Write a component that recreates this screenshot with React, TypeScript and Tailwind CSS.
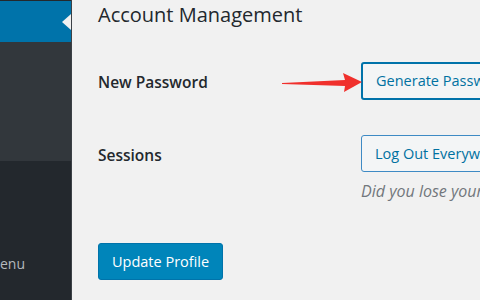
import React from 'react';

const font = { fontFamily: '"Open Sans", "Noto Sans", sans-serif' };

const Sidebar = () => (
    <div className="w-[72px] shrink-0 flex flex-col bg-[#23282d] border-r border-[#3c4146]">
        <div className="h-px bg-[#23282d]" />
        {/* current menu item */}
        <div className="relative h-[41px] bg-[#0073aa]">
            <div className="absolute right-0 top-[13px] w-0 h-0 border-y-[8px] border-y-transparent border-r-[9px] border-r-[#f1f1f1]" />
        </div>
        {/* submenu */}
        <div className="h-[119px] bg-[#32373c]" />
        <div className="flex-1 flex flex-col">
            <div className="mt-[92px] h-[20px] w-[25px] overflow-hidden flex justify-end items-center">
                <span className="whitespace-nowrap text-[14px] text-[#b4b9be]">Collapse menu</span>
            </div>
        </div>
    </div>
);

const Row = ({ label, children, height }: { label: string; children: React.ReactNode; height: string }) => (
    <div className={`flex ${height}`}>
        <div className="w-[263px] shrink-0 text-[15.5px] font-semibold text-[#23282d] pt-[9px]">{label}</div>
        <div className="flex-1">{children}</div>
    </div>
);

export default function App() {
    return (
        <div className="w-[480px] h-[300px] overflow-hidden flex bg-[#f1f1f1]" style={font}>
            <Sidebar />
            <div className="relative flex-1 pl-[26px] pt-px overflow-hidden">
                <h2 className="text-[20px] leading-[28px] font-medium text-[#23282d] whitespace-nowrap">Account Management</h2>

                <div className="mt-[33px] flex flex-col">
                    <Row label="New Password" height="h-[73px]">
                        <button className="h-[38px] px-[13px] whitespace-nowrap rounded-[3px] border-2 border-[#0073aa] bg-[#f3f5f6] text-[14.5px] text-[#0071a1]">
                            Generate Password
                        </button>
                    </Row>
                    <Row label="Sessions" height="h-[108px]">
                        <div className="flex flex-col">
                            <button className="self-start h-[37px] px-[13px] whitespace-nowrap rounded-[3px] border border-[#3e8ac4] bg-[#f3f5f6] text-[14.5px] text-[#0071a1]">
                                Log Out Everywhere Else
                            </button>
                            <p className="mt-[7px] text-[16px] italic text-[#72777c] whitespace-nowrap">
                                Did you lose your phone or leave your account logged in at a public computer?
                            </p>
                        </div>
                    </Row>
                </div>

                <button className="h-[37px] px-[13px] rounded-[3px] bg-[#0085ba] border border-[#0073aa] text-[14.5px] text-white">
                    Update Profile
                </button>

                {/* red annotation arrow */}
                <svg className="absolute left-[210px] top-[70px]" width="80" height="26" viewBox="0 0 80 26">
                    <polygon points="0,13 63,10 61,3 80,12 62,22 63,16 0,14" fill="#f0302c" />
                </svg>
            </div>
        </div>
    );
}
